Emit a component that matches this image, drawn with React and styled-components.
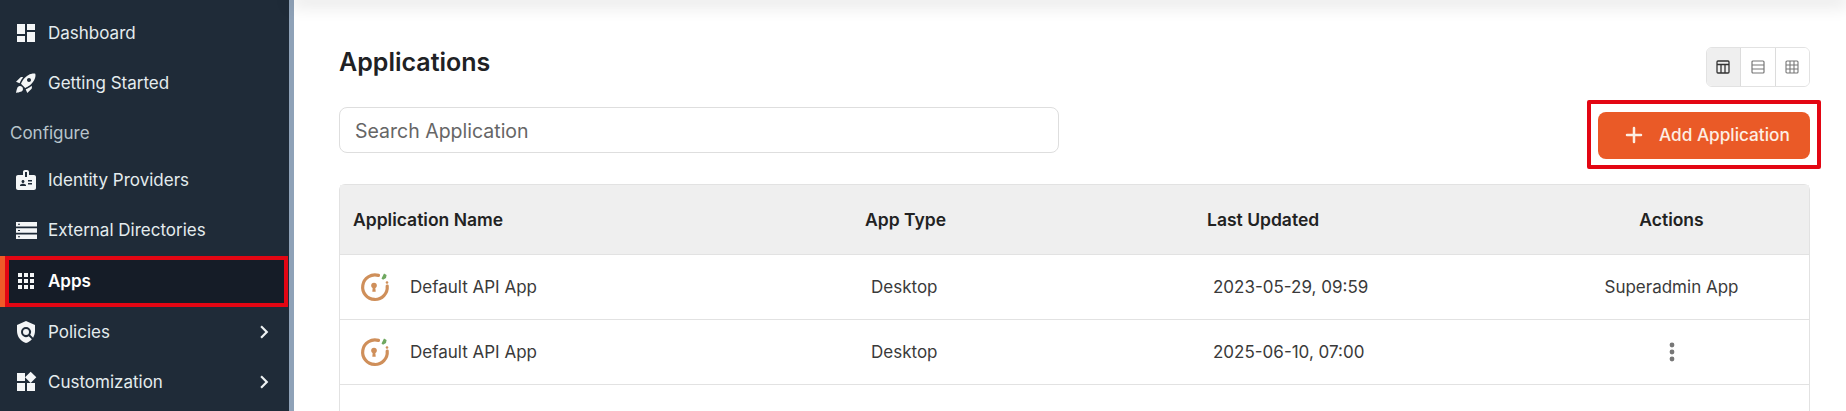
import React from 'react';
import styled, {createGlobalStyle} from 'styled-components';
import {
  MdDashboard,
  MdRocketLaunch,
  MdBadge,
  MdApps,
  MdPolicy,
  MdWidgets,
  MdChevronRight,
} from 'react-icons/md';
import {Plus} from 'lucide-react';

const GlobalStyle = createGlobalStyle`
  html, body {
    margin: 0;
    padding: 0;
    height: 100%;
    overflow: hidden;
    background: #fff;
    font-family: Inter, "Noto Sans", sans-serif;
  }
`;

const Page = styled.div`
  display: flex;
  width: 1846px;
  height: 411px;
  overflow: hidden;
`;

const Sidebar = styled.nav`
  width: 289px;
  height: 403px;
  flex-shrink: 0;
  padding-top: 8px;
  background: #1f2b38;
  border-right: 5px solid #8fa2b8;
`;

const NavRow = styled.div`
  display: flex;
  align-items: center;
  height: ${(p) => (p.$tall ? '51px' : '50px')};
  padding-left: 14px;
  padding-right: 12px;
  color: #e4ecee;
  font-size: 17px;
`;

const NavIcon = styled.span`
  display: flex;
  align-items: center;
  justify-content: center;
  width: 24px;
  height: 24px;
  margin-right: 10px;
  color: #f4f6f7;
  font-size: 26px;
`;

const NavLabel = styled.span`
  flex: 1;
`;

const Chevron = styled(MdChevronRight)`
  font-size: 26px;
  color: #eef2f3;
`;

const SectionLabel = styled.div`
  height: 44px;
  padding: 3px 0 0 10px;
  display: flex;
  align-items: center;
  color: #b8c4cb;
  font-size: 17px;
`;

const ActiveRow = styled.div`
  margin: 1px 1px -1px 0;
  height: 51px;
  box-sizing: border-box;
  border-left: 5px solid #f05a28;
`;

const ActiveBox = styled.div`
  height: 100%;
  box-sizing: border-box;
  display: flex;
  align-items: center;
  padding: 0 0 2px 5px;
  background: #151c27;
  border: 4px solid #e30613;
  color: #fff;
  font-size: 17px;
  font-weight: 600;
`;

const Main = styled.main`
  flex: 1;
  min-width: 0;
  position: relative;
  padding: 47px 36px 0 45px;
`;

const TopShadow = styled.div`
  position: absolute;
  top: 0;
  left: 0;
  right: 0;
  height: 0;
  box-shadow: 0 0 18px 3px rgba(0, 0, 0, 0.22);
`;

const Toolbar = styled.div`
  display: flex;
  justify-content: space-between;
  align-items: flex-start;
`;

const ToolbarLeft = styled.div`
  display: flex;
  flex-direction: column;
`;

const ToolbarRight = styled.div`
  display: flex;
  flex-direction: column;
  align-items: flex-end;
`;

const Title = styled.h1`
  margin: 0 0 30px;
  font-size: 25px;
  line-height: 30px;
  font-weight: 600;
  color: #202124;
`;

const SearchInput = styled.input`
  width: 720px;
  height: 46px;
  box-sizing: border-box;
  padding: 1px 15px 0;
  border: 1px solid #dedede;
  border-radius: 8px;
  font-family: inherit;
  font-size: 19.5px;
  outline: none;

  &::placeholder {
    color: #666;
    opacity: 1;
  }
`;

const ViewToggle = styled.div`
  display: flex;
  height: 40px;
  box-sizing: border-box;
  border: 1px solid #e2e2e2;
  border-radius: 6px;
  overflow: hidden;
`;

const ViewButton = styled.div`
  width: 33.5px;
  display: flex;
  align-items: center;
  justify-content: center;
  background: ${(p) => (p.$active ? '#efefef' : '#fff')};
  color: ${(p) => (p.$active ? '#333' : '#777')};
  border-left: ${(p) => (p.$first ? 'none' : '1px solid #dcdcdc')};
`;

const Highlight = styled.div`
  margin: 13px -11px 0 0;
  padding: 8px 7px 6px;
  border: 4px solid #e30613;
  border-radius: 2px;
`;

const AddButton = styled.button`
  width: 212px;
  height: 47px;
  display: flex;
  align-items: center;
  padding: 0 0 2px 24px;
  border: none;
  border-radius: 8px;
  background: #ea5a27;
  color: #fdeee3;
  font-family: inherit;
  font-size: 17.2px;
  font-weight: 500;
  gap: 13px;
`;

const Table = styled.div`
  margin-top: 15px;
  border: 1px solid #e2e2e2;
  border-bottom: none;
  border-radius: 6px 6px 0 0;
  height: 240px;
  box-sizing: border-box;
`;

const Row = styled.div`
  display: grid;
  grid-template-columns: 512px 342px 340px 1fr;
  align-items: center;
  height: ${(p) => (p.$head ? '70px' : '65px')};
  box-sizing: border-box;
  border-bottom: 1px solid #e2e2e2;
  background: ${(p) => (p.$head ? '#efefef' : '#fff')};
`;

const HeadCell = styled.div`
  padding-left: ${(p) => (p.$center ? '0' : '13px')};
  font-size: 17.5px;
  font-weight: 600;
  color: #222;
  text-align: ${(p) => (p.$center ? 'center' : 'left')};
`;

const Cell = styled.div`
  display: flex;
  align-items: center;
  padding-left: ${(p) => (p.$center ? '0' : '19px')};
  justify-content: ${(p) => (p.$center ? 'center' : 'flex-start')};
  font-size: 17px;
  color: #3a3a3a;
`;

const NameCell = styled(Cell)`
  padding-left: 20px;
  gap: 20px;
`;

const Dots = styled.svg`
  width: 6px;
  height: 20px;
  fill: #777;
`;

const DirectoriesIcon = () => (
  <svg width="21" height="17" viewBox="0 0 21 17" fill="currentColor">
    <path d="M0 0h21v4.5H0zM0 6.2h21v4.6H0zM0 12.5h21V17H0z" />
    <path d="M2 1.8h2v1H2zM2 8h2v1H2zM2 14.2h2v1H2z" fill="#1f2b38" />
  </svg>
);

const LayoutIcon = () => (
  <svg width="14" height="14" viewBox="0 0 14 14" fill="none" stroke="currentColor" strokeWidth="1.3">
    <rect x="1" y="1" width="12" height="12" rx="1" />
    <path d="M1 4.5h12M5 4.5V13M9 4.5V13" />
  </svg>
);

const RowsIcon = () => (
  <svg width="14" height="14" viewBox="0 0 14 14" fill="none" stroke="currentColor" strokeWidth="1.2">
    <rect x="1" y="1" width="12" height="12" rx="1" />
    <path d="M1 5h12M1 9h12" />
  </svg>
);

const GridIcon = () => (
  <svg width="14" height="14" viewBox="0 0 14 14" fill="none" stroke="currentColor" strokeWidth="1.1">
    <rect x="1" y="1" width="12" height="12" rx="1" />
    <path d="M1 5h12M1 9h12M5 1v12M9 1v12" />
  </svg>
);

const AppLogo = () => (
  <svg width="30" height="30" viewBox="0 0 30 30" fill="none">
    <path
      d="M18.5 3.4A12.3 12.3 0 1 0 27.2 14"
      stroke="#cf8f5a"
      strokeWidth="3.2"
      strokeLinecap="round"
    />
    <path d="M21.5 6.5 24 1.5l2.6 1.6-.6 3-3 1.6z" fill="#6fa860" />
    <circle cx="27" cy="10.5" r="1.3" fill="#cf8f5a" />
    <circle cx="14" cy="13.5" r="2.8" fill="#cf8f5a" />
    <path d="M12.8 14.5h2.4l.5 5.2h-3.4z" fill="#cf8f5a" />
  </svg>
);

const apps = [
  {id: 1, updated: '2023-05-29, 09:59', superadmin: true},
  {id: 2, updated: '2025-06-10, 07:00', superadmin: false},
];

const App = () => {
  return (
    <>
      <GlobalStyle />
      <Page>
        <Sidebar>
          <NavRow>
            <NavIcon><MdDashboard /></NavIcon>
            <NavLabel>Dashboard</NavLabel>
          </NavRow>
          <NavRow>
            <NavIcon><MdRocketLaunch /></NavIcon>
            <NavLabel>Getting Started</NavLabel>
          </NavRow>
          <SectionLabel>Configure</SectionLabel>
          <NavRow>
            <NavIcon><MdBadge /></NavIcon>
            <NavLabel>Identity Providers</NavLabel>
          </NavRow>
          <NavRow>
            <NavIcon><DirectoriesIcon /></NavIcon>
            <NavLabel>External Directories</NavLabel>
          </NavRow>
          <ActiveRow>
            <ActiveBox>
              <NavIcon><MdApps /></NavIcon>
              <NavLabel>Apps</NavLabel>
            </ActiveBox>
          </ActiveRow>
          <NavRow $tall>
            <NavIcon><MdPolicy /></NavIcon>
            <NavLabel>Policies</NavLabel>
            <Chevron />
          </NavRow>
          <NavRow>
            <NavIcon><MdWidgets /></NavIcon>
            <NavLabel>Customization</NavLabel>
            <Chevron />
          </NavRow>
        </Sidebar>
        <Main>
          <TopShadow />
          <Toolbar>
            <ToolbarLeft>
              <Title>Applications</Title>
              <SearchInput placeholder="Search Application" />
            </ToolbarLeft>
            <ToolbarRight>
              <ViewToggle>
                <ViewButton $active $first><LayoutIcon /></ViewButton>
                <ViewButton><RowsIcon /></ViewButton>
                <ViewButton><GridIcon /></ViewButton>
              </ViewToggle>
              <Highlight>
                <AddButton>
                  <Plus size={24} strokeWidth={2.5} />
                  Add Application
                </AddButton>
              </Highlight>
            </ToolbarRight>
          </Toolbar>
          <Table>
            <Row $head>
              <HeadCell>Application Name</HeadCell>
              <HeadCell>App Type</HeadCell>
              <HeadCell>Last Updated</HeadCell>
              <HeadCell $center>Actions</HeadCell>
            </Row>
            {apps.map((app) => (
              <Row key={app.id}>
                <NameCell><AppLogo />Default API App</NameCell>
                <Cell>Desktop</Cell>
                <Cell>{app.updated}</Cell>
                <Cell $center>
                  {app.superadmin ? 'Superadmin App' : (
                    <Dots viewBox="0 0 6 20">
                      <circle cx="3" cy="3" r="2.4" />
                      <circle cx="3" cy="10" r="2.4" />
                      <circle cx="3" cy="17" r="2.4" />
                    </Dots>
                  )}
                </Cell>
              </Row>
            ))}
          </Table>
        </Main>
      </Page>
    </>
  );
};

export default App;
